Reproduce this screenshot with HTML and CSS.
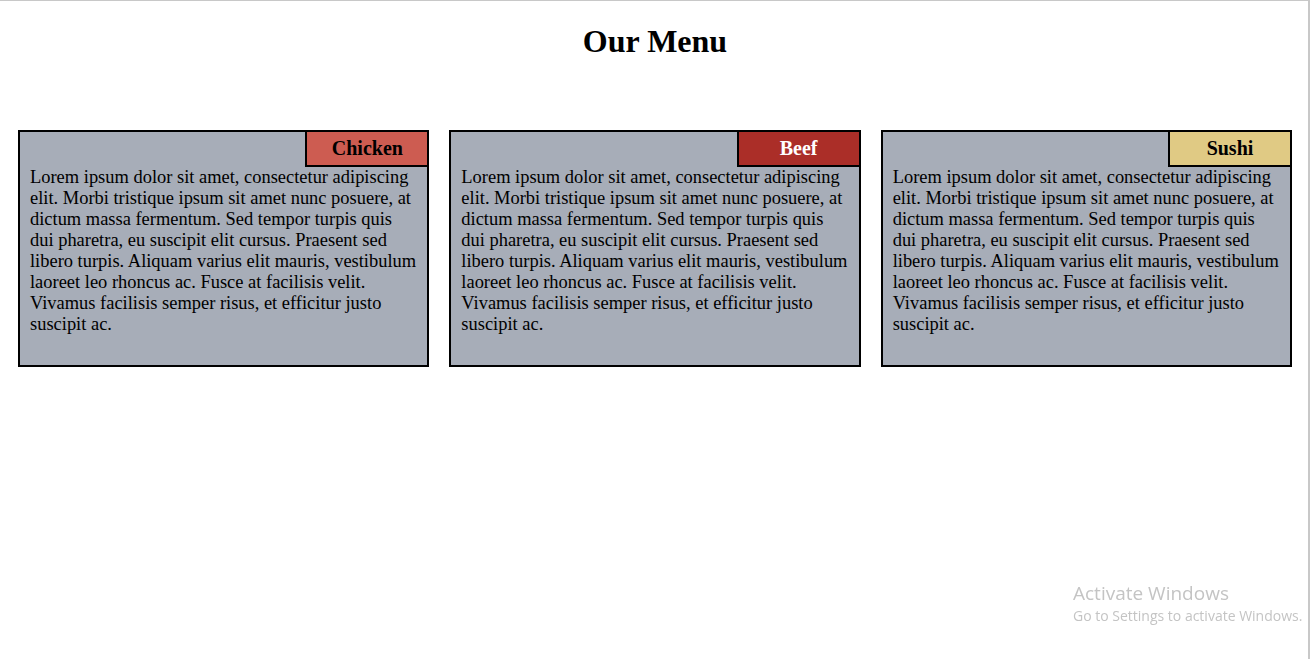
FILE: index.html
```html
<!DOCTYPE html>
<html>
<head>
<meta charset="utf-8">
<title>Our Menu</title>
<link rel="stylesheet" href="styles.css">
</head>
<body>
<h1 class="title">Our Menu</h1>
<div class="menu">
  <div class="card">
    <div class="tag tag-chicken">Chicken</div>
    <p class="desc">Lorem ipsum dolor sit amet, consectetur adipiscing elit. Morbi tristique ipsum sit amet nunc posuere, at dictum massa fermentum. Sed tempor turpis quis dui pharetra, eu suscipit elit cursus. Praesent sed libero turpis. Aliquam varius elit mauris, vestibulum laoreet leo rhoncus ac. Fusce at facilisis velit. Vivamus facilisis semper risus, et efficitur justo suscipit ac.</p>
  </div>
  <div class="card">
    <div class="tag tag-beef">Beef</div>
    <p class="desc">Lorem ipsum dolor sit amet, consectetur adipiscing elit. Morbi tristique ipsum sit amet nunc posuere, at dictum massa fermentum. Sed tempor turpis quis dui pharetra, eu suscipit elit cursus. Praesent sed libero turpis. Aliquam varius elit mauris, vestibulum laoreet leo rhoncus ac. Fusce at facilisis velit. Vivamus facilisis semper risus, et efficitur justo suscipit ac.</p>
  </div>
  <div class="card">
    <div class="tag tag-sushi">Sushi</div>
    <p class="desc">Lorem ipsum dolor sit amet, consectetur adipiscing elit. Morbi tristique ipsum sit amet nunc posuere, at dictum massa fermentum. Sed tempor turpis quis dui pharetra, eu suscipit elit cursus. Praesent sed libero turpis. Aliquam varius elit mauris, vestibulum laoreet leo rhoncus ac. Fusce at facilisis velit. Vivamus facilisis semper risus, et efficitur justo suscipit ac.</p>
  </div>
</div>
<div class="watermark">
  <div class="wm-title">Activate Windows</div>
  <div class="wm-sub">Go to Settings to activate Windows.</div>
</div>
</body>
</html>
```
FILE: styles.css
```css
html {
  border-top: 1px solid #c8c8c8;
  border-right: 2px solid #c8c8c8;
  min-height: 100%;
  box-sizing: border-box;
}
body {
  margin: 0;
  padding: 22px 6px 8px 8px;
  font-family: "Liberation Serif", "Times New Roman", serif;
  color: #000;
  background: #fff;
}
.title {
  margin: 0;
  text-align: center;
  font-size: 32px;
  font-weight: bold;
  line-height: 37px;
}
.menu {
  display: flex;
  gap: 20px;
  padding: 0 10px;
  margin-top: 70px;
}
.card {
  flex: 1 1 0;
  display: flex;
  flex-direction: column;
  background: #a7adb8;
  border: 2px solid #000;
  min-width: 0;
}
.tag {
  align-self: flex-end;
  width: 120px;
  margin: -2px -2px 0 0;
  border: 2px solid #000;
  text-align: center;
  font-size: 20px;
  font-weight: bold;
  line-height: 33px;
  height: 33px;
}
.tag-chicken { background: #cd5c51; color: #000; }
.tag-beef { background: #ab2e28; color: #fff; }
.tag-sushi { background: #e0ca84; color: #000; }
.desc {
  margin: 0;
  padding: 0 10px 30px 10px;
  font-size: 18.45px;
  line-height: 21px;
}
.watermark {
  position: fixed;
  left: 1073px;
  top: 581px;
  color: #c4c4c4;
  font-family: "Open Sans", "Noto Sans", sans-serif;
  white-space: nowrap;
}
.wm-title {
  font-size: 19px;
  line-height: 24px;
}
.wm-sub {
  font-size: 14px;
  line-height: 22px;
}
```
